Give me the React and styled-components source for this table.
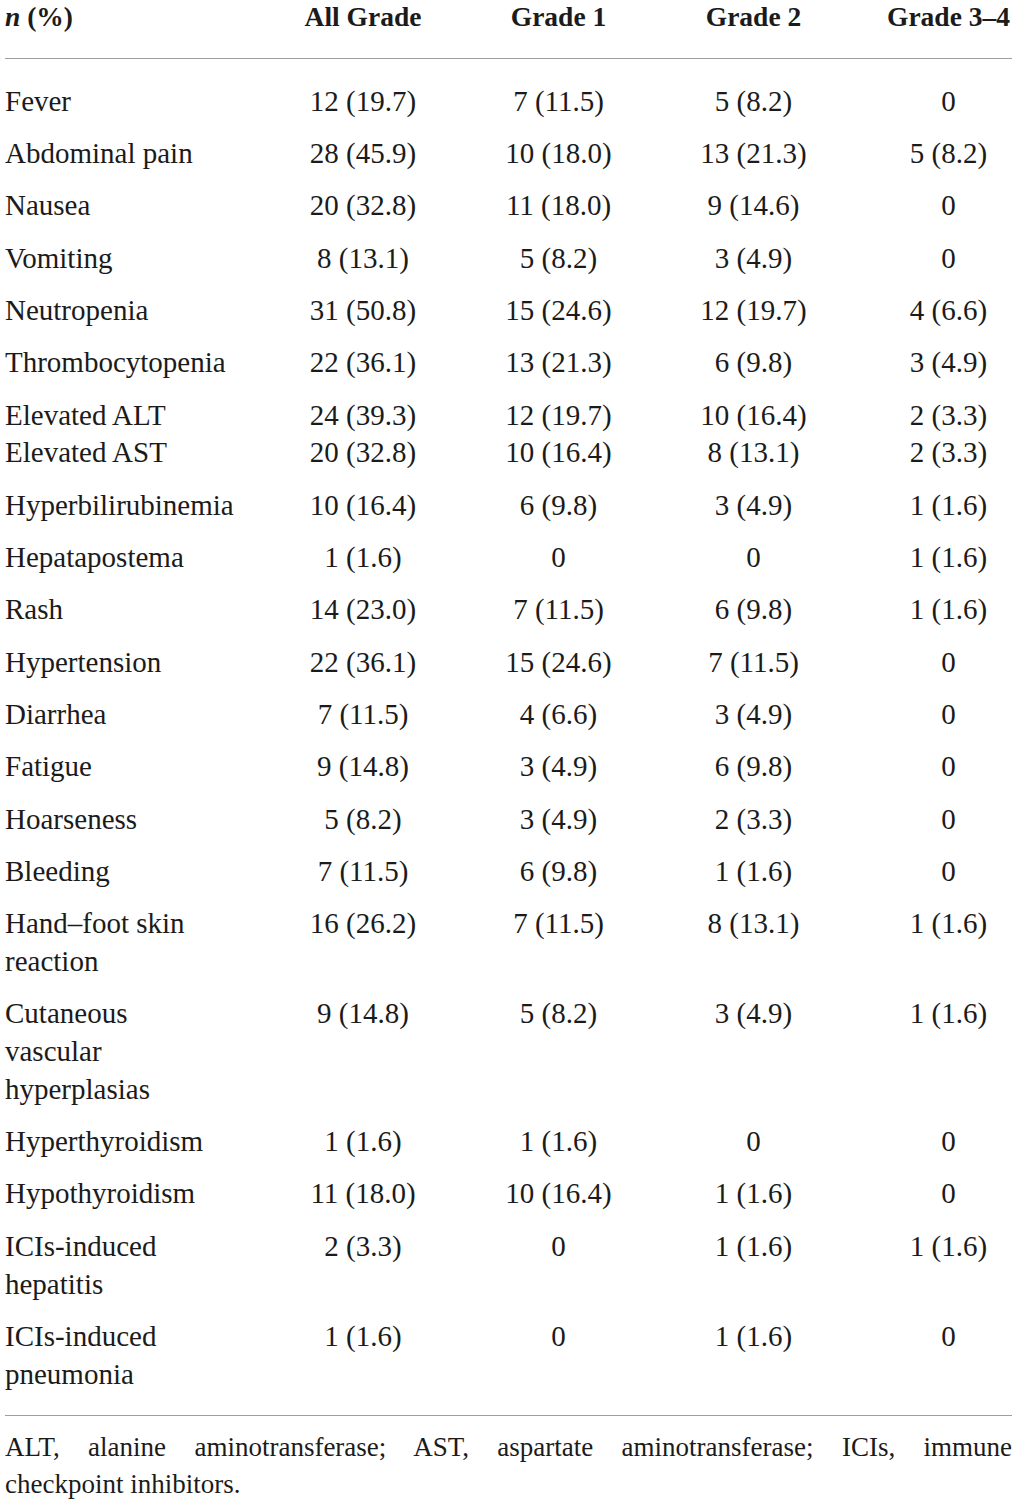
import React from 'react';
import styled, { createGlobalStyle } from 'styled-components';

const GlobalStyle = createGlobalStyle`
  html, body {
    margin: 0;
    padding: 0;
    background: #ffffff;
  }
  body {
    font-family: "Liberation Serif", "Times New Roman", serif;
    color: #1b1b1b;
  }
`;

const headers = ['All Grade', 'Grade 1', 'Grade 2', 'Grade 3–4'];

const rows = [
  ['Fever', '12 (19.7)', '7 (11.5)', '5 (8.2)', '0'],
  ['Abdominal pain', '28 (45.9)', '10 (18.0)', '13 (21.3)', '5 (8.2)'],
  ['Nausea', '20 (32.8)', '11 (18.0)', '9 (14.6)', '0'],
  ['Vomiting', '8 (13.1)', '5 (8.2)', '3 (4.9)', '0'],
  ['Neutropenia', '31 (50.8)', '15 (24.6)', '12 (19.7)', '4 (6.6)'],
  ['Thrombocytopenia', '22 (36.1)', '13 (21.3)', '6 (9.8)', '3 (4.9)'],
  ['Elevated ALT\nElevated AST', '24 (39.3)\n20 (32.8)', '12 (19.7)\n10 (16.4)', '10 (16.4)\n8 (13.1)', '2 (3.3)\n2 (3.3)'],
  ['Hyperbilirubinemia', '10 (16.4)', '6 (9.8)', '3 (4.9)', '1 (1.6)'],
  ['Hepatapostema', '1 (1.6)', '0', '0', '1 (1.6)'],
  ['Rash', '14 (23.0)', '7 (11.5)', '6 (9.8)', '1 (1.6)'],
  ['Hypertension', '22 (36.1)', '15 (24.6)', '7 (11.5)', '0'],
  ['Diarrhea', '7 (11.5)', '4 (6.6)', '3 (4.9)', '0'],
  ['Fatigue', '9 (14.8)', '3 (4.9)', '6 (9.8)', '0'],
  ['Hoarseness', '5 (8.2)', '3 (4.9)', '2 (3.3)', '0'],
  ['Bleeding', '7 (11.5)', '6 (9.8)', '1 (1.6)', '0'],
  ['Hand–foot skin\nreaction', '16 (26.2)', '7 (11.5)', '8 (13.1)', '1 (1.6)'],
  ['Cutaneous\nvascular\nhyperplasias', '9 (14.8)', '5 (8.2)', '3 (4.9)', '1 (1.6)'],
  ['Hyperthyroidism', '1 (1.6)', '1 (1.6)', '0', '0'],
  ['Hypothyroidism', '11 (18.0)', '10 (16.4)', '1 (1.6)', '0'],
  ['ICIs-induced\nhepatitis', '2 (3.3)', '0', '1 (1.6)', '1 (1.6)'],
  ['ICIs-induced\npneumonia', '1 (1.6)', '0', '1 (1.6)', '0'],
];

const App = () => (
  <>
    <GlobalStyle />
    <Page>
      <Table>
        <colgroup>
          <col style={{ width: 260 }} />
          <col style={{ width: 196 }} />
          <col style={{ width: 195 }} />
          <col style={{ width: 195 }} />
          <col />
        </colgroup>
        <thead>
          <tr>
            <HeadCell $label>
              <i>n</i> (%)
            </HeadCell>
            {headers.map((h, i) => (
              <HeadCell key={h} $last={i === headers.length - 1}>
                {h}
              </HeadCell>
            ))}
          </tr>
        </thead>
        <tbody>
          {rows.map((row, r) => (
            <Row key={r}>
              {row.map((cell, c) => (
                <Cell key={c} $label={c === 0} $last={c === row.length - 1}>
                  {cell}
                </Cell>
              ))}
            </Row>
          ))}
        </tbody>
      </Table>
      <Footnote>
        <FootLine $justify>
          ALT, alanine aminotransferase; AST, aspartate aminotransferase; ICIs, immune
        </FootLine>
        <FootLine>checkpoint inhibitors.</FootLine>
      </Footnote>
    </Page>
  </>
);

const Page = styled.div`
  width: 1007px;
  margin: 0 5px;
`;

const Table = styled.table`
  width: 100%;
  border-collapse: collapse;
  table-layout: fixed;
`;

const HeadCell = styled.th`
  font-size: 27.5px;
  font-weight: 700;
  line-height: 34px;
  padding: 0 0 24px ${(p) => (p.$last ? '34px' : '0')};
  text-align: ${(p) => (p.$label ? 'left' : 'center')};
  border-bottom: 1px solid #9e9e9e;
  white-space: nowrap;
  vertical-align: top;

  i {
    font-style: italic;
  }
`;

const Row = styled.tr`
  td {
    padding-top: 7.25px;
    padding-bottom: 7.25px;
  }
  &:first-child td {
    padding-top: 23.9px;
  }
  &:last-child td {
    padding-bottom: 22px;
  }
`;

const Cell = styled.td`
  font-size: 29px;
  line-height: 37.8px;
  white-space: pre;
  vertical-align: top;
  text-align: ${(p) => (p.$label ? 'left' : 'center')};
  padding-left: ${(p) => (p.$last ? '34px' : '0')};
  padding-right: 0;
`;

const Footnote = styled.div`
  border-top: 1px solid #9e9e9e;
  padding-top: 13px;
  font-size: 27px;
  line-height: 37px;
`;

const FootLine = styled.div`
  text-align: ${(p) => (p.$justify ? 'justify' : 'left')};
  text-align-last: ${(p) => (p.$justify ? 'justify' : 'auto')};
`;

export default App;
